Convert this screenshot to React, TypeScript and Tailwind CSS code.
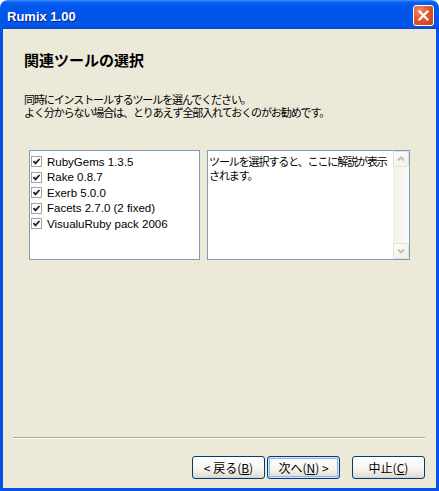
import React from "react";

// Title Bar Component
function TitleBar() {
  return (
    <div className="h-[29px] rounded-t-[8px] flex items-center justify-between pl-[7px] pr-[5px] pt-[2px] bg-[linear-gradient(to_bottom,#3d8fff_0%,#0a5ff0_8%,#0058ee_20%,#0054e6_55%,#0057ec_85%,#0a4fd8_96%,#0840c8_100%)]">
      <span className="pt-[2px] leading-[16px] font-['Liberation_Sans',Arial,sans-serif] font-bold text-[13px] text-white [text-shadow:1px_1px_#0a1a8a]">
        Rumix 1.00
      </span>
      <button className="w-[21px] h-[21px] rounded-[3px] border border-white flex items-center justify-center bg-[radial-gradient(circle_at_30%_25%,#f08a6a_0%,#e0572f_45%,#c8401b_100%)]">
        <svg width="13" height="13" viewBox="0 0 13 13">
          <path d="M2.5 2.5 L10.5 10.5 M10.5 2.5 L2.5 10.5" stroke="white" strokeWidth="2.2" strokeLinecap="square" />
        </svg>
      </button>
    </div>
  );
}

// Check Item Component
function CheckItem({ label }: { label: string }) {
  return (
    <div className="h-[15.5px] flex items-center">
      <span className="w-[11px] h-[11px] border border-[#a4a4a4] bg-white flex items-center justify-center">
        <svg width="9" height="9" viewBox="0 0 9 9">
          <polyline points="1.5,4.2 3.5,6.4 7.5,2" fill="none" stroke="#202020" strokeWidth="1.8" />
        </svg>
      </span>
      <span className="ml-[5px] text-[11.5px] leading-[14px] text-black font-['Liberation_Sans',Arial,sans-serif] whitespace-nowrap">
        {label}
      </span>
    </div>
  );
}

// Scroll Arrow Component
function ScrollArrow({ down = false }: { down?: boolean }) {
  return (
    <div className="w-[16px] h-[16px] rounded-[2px] border border-[#e4e2d8] bg-[linear-gradient(to_bottom_right,#fdfdfb,#f0efe8)] flex items-center justify-center">
      <svg width="10" height="10" viewBox="0 0 10 10">
        <path
          d={down ? "M2 3.5 L5 6.5 L8 3.5" : "M2 6.5 L5 3.5 L8 6.5"}
          fill="none"
          stroke="#c5c2b2"
          strokeWidth="2"
        />
      </svg>
    </div>
  );
}

// XP Button Component
function XpButton({
  children,
  isDefault = false,
  className = "",
}: {
  children: React.ReactNode;
  isDefault?: boolean;
  className?: string;
}) {
  return (
    <button
      className={
        "w-[73px] h-[23px] rounded-[3px] border border-[#003c74] bg-[linear-gradient(to_bottom,#ffffff_0%,#f5f4ef_60%,#e3e0d6_90%,#d6d0c5_100%)] flex items-center justify-center text-[12px] leading-[14px] text-black font-['Noto_Sans_CJK_JP',sans-serif] " +
        (isDefault ? "shadow-[inset_0_0_0_1px_#cee7ff,inset_0_0_0_2px_#8fb2ea] " : "") +
        className
      }
    >
      {children}
    </button>
  );
}

export default function App() {
  const items = [
    "RubyGems 1.3.5",
    "Rake 0.8.7",
    "Exerb 5.0.0",
    "Facets 2.7.0 (2 fixed)",
    "VisualuRuby pack 2006",
  ];

  return (
    <div className="w-[439px] h-[491px] flex flex-col bg-white">
      <TitleBar />
      <div className="flex-1 flex flex-col bg-[#ece9d8] border-x-[3px] border-b-[3px] border-[#0553e3]">
        <div className="pl-[21px] pt-[21px] text-black font-['Noto_Sans_CJK_JP',sans-serif]">
          <h1 className="text-[15px] leading-[20px] font-bold">関連ツールの選択</h1>
          <p className="mt-[23px] text-[11px] leading-[13px] tracking-[-1.1px] whitespace-nowrap">
            同時にインストールするツールを選んでください。
            <br />
            よく分からない場合は、とりあえず全部入れておくのがお勧めです。
          </p>
        </div>

        <div className="flex mt-[31px] pl-[26px] gap-[7px]">
          <div className="w-[171px] h-[110px] border border-[#7f9db9] bg-white pt-[3px] pl-[1px]">
            {items.map((item) => (
              <CheckItem key={item} label={item} />
            ))}
          </div>
          <div className="w-[203px] h-[110px] border border-[#7f9db9] bg-white flex">
            <div className="flex-1 pt-[3px] pl-[1px] text-[11px] leading-[14px] tracking-[-1.1px] whitespace-nowrap text-black font-['Noto_Sans_CJK_JP',sans-serif]">
              ツールを選択すると、ここに解説が表示
              <br />
              されます。
            </div>
            <div className="w-[16px] flex flex-col justify-between bg-[linear-gradient(to_right,#f3f1ea,#fbfbf8)]">
              <ScrollArrow />
              <ScrollArrow down />
            </div>
          </div>
        </div>

        <div className="flex-1" />

        <div className="ml-[10px] mr-[11px] h-[2px] border-t border-t-[#aca899] border-b border-b-white" />

        <div className="flex justify-end pr-[11px] pt-[17px] pb-[9px]">
          <XpButton className="mr-[2px]">
            &lt; 戻る(<span className="underline">B</span>)
          </XpButton>
          <XpButton isDefault className="mr-[12px]">
            次へ(<span className="underline">N</span>) &gt;
          </XpButton>
          <XpButton>
            中止(<span className="underline">C</span>)
          </XpButton>
        </div>
      </div>
    </div>
  );
}
